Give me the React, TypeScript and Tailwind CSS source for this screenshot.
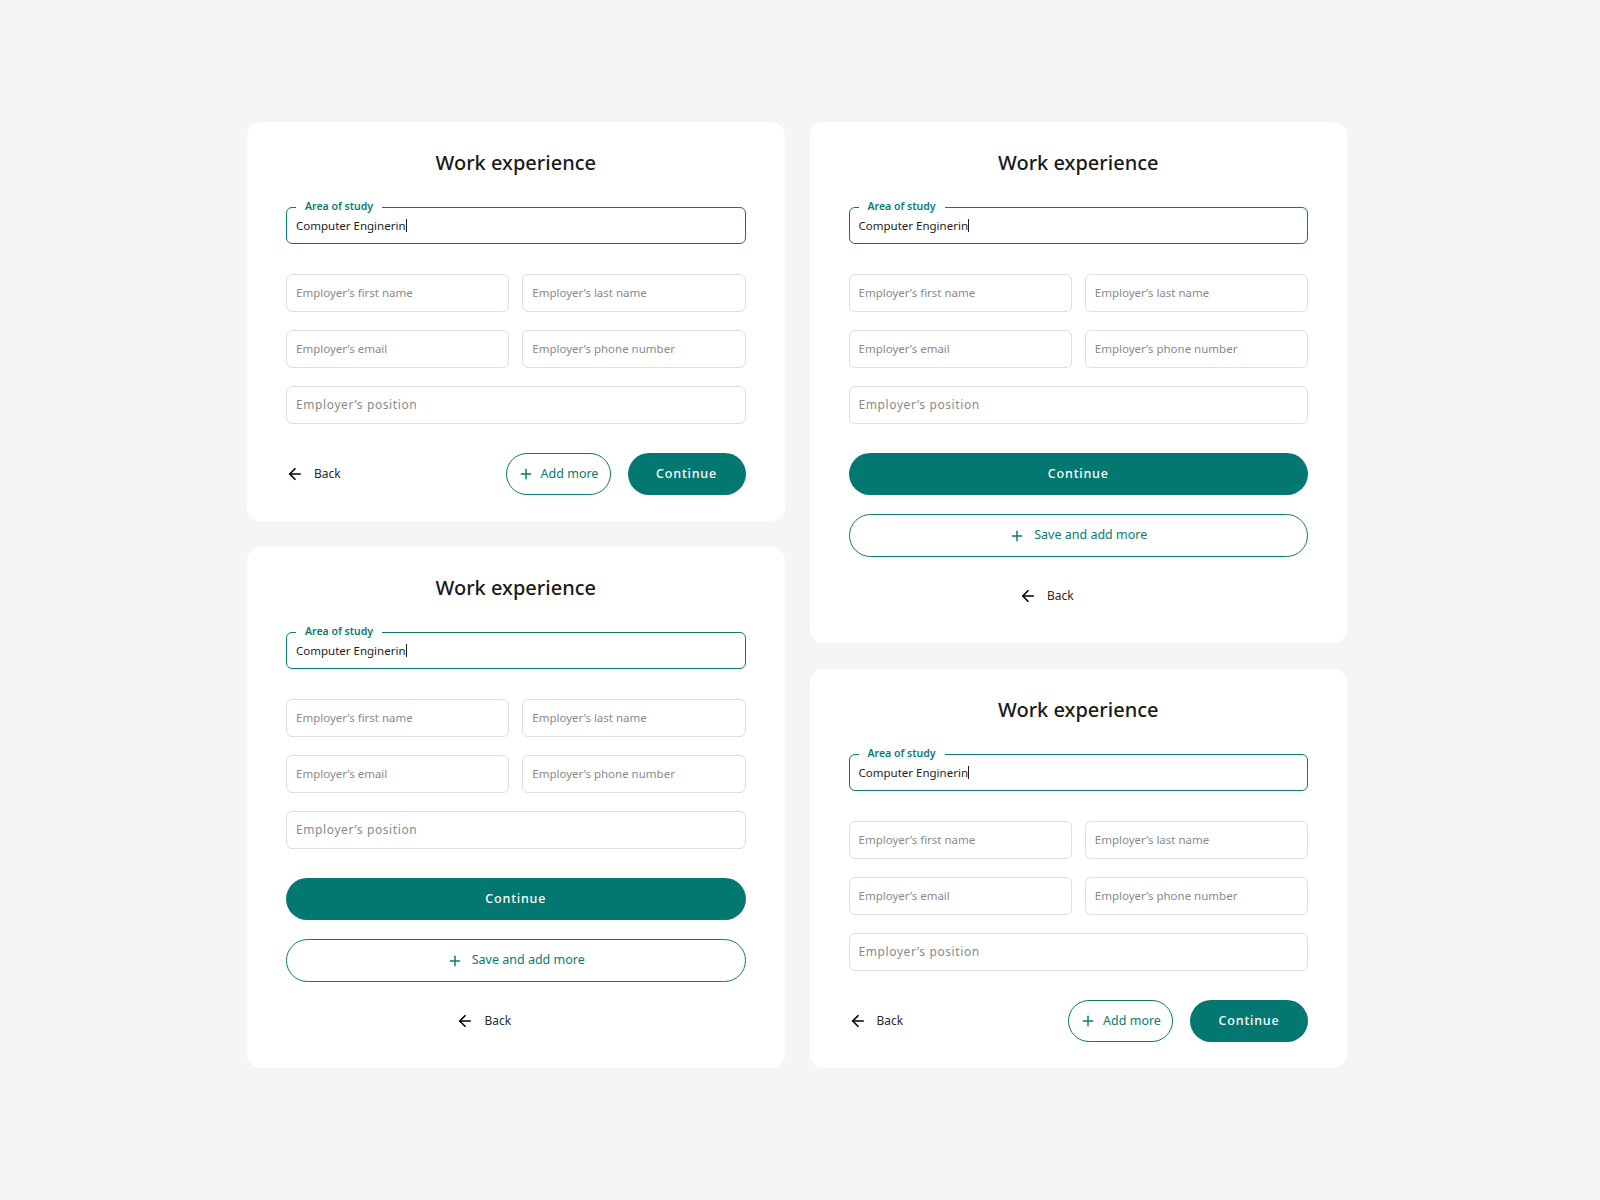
import { ArrowLeft, Plus } from "lucide-react";

const font = { fontFamily: '"Noto Sans", "Open Sans", sans-serif' };

const Field = ({ placeholder, wide }: { placeholder: string; wide?: boolean }) => (
  <div
    className={`h-[38px] border border-[#dedede] rounded-[6px] flex items-center pl-[9px] text-[#8a8a8a] ${
      wide ? "col-span-2 text-[12px] tracking-[0.6px]" : "text-[11.5px]"
    }`}
  >
    {placeholder}
  </div>
);

const Fields = () => (
  <>
    <div className="relative mt-[28px] h-[37px] border border-[#0b7a70] rounded-[6px] flex items-center pl-[9px]">
      <span className="absolute left-[9px] -top-[9px] h-[14px] leading-[14px] bg-white px-[9px] text-[10.5px] font-semibold text-[#0b7a70]">
        Area of study
      </span>
      <span className="text-[11.5px] text-[#1c1c1c]">Computer Enginerin</span>
      <span className="w-px h-[13px] bg-[#1c1c1c]" />
    </div>
    <div className="mt-[30px] grid grid-cols-2 gap-x-[13px] gap-y-[18px]">
      <Field placeholder="Employer’s first name" />
      <Field placeholder="Employer’s last name" />
      <Field placeholder="Employer’s email" />
      <Field placeholder="Employer’s phone number" />
      <Field placeholder="Employer’s position" wide />
    </div>
  </>
);

const Back = () => (
  <div className="flex items-center gap-[10px] h-[20px]">
    <ArrowLeft className="w-[18px] h-[18px] text-black" strokeWidth={2.2} />
    <span className="text-[12px] text-[#2a2a2a]">Back</span>
  </div>
);

const Title = () => (
  <h2 className="h-[32px] leading-[32px] text-center text-[20px] font-medium text-[#1a1a1a]">
    Work experience
  </h2>
);

const InlineCard = () => (
  <div className="bg-white rounded-[14px] px-[39px] pt-[25px] pb-[26px]">
    <Title />
    <Fields />
    <div className="mt-[29px] h-[42px] flex items-center justify-between">
      <Back />
      <div className="flex items-center gap-[17px]">
        <button className="w-[105px] h-[42px] rounded-full border border-[#0b7a70] flex items-center justify-center gap-[7px] text-[12.5px] text-[#0b7a70]">
          <Plus className="w-[16px] h-[16px]" strokeWidth={2.2} />
          Add more
        </button>
        <button className="w-[118px] h-[42px] rounded-full bg-[#037870] text-white text-[12.5px] font-medium tracking-[0.8px]">
          Continue
        </button>
      </div>
    </div>
  </div>
);

const StackedCard = () => (
  <div className="bg-white rounded-[14px] px-[39px] pt-[25px] pb-[37px]">
    <Title />
    <Fields />
    <button className="mt-[29px] w-full h-[42px] rounded-full bg-[#037870] text-white text-[12.5px] font-medium tracking-[0.8px]">
      Continue
    </button>
    <button className="mt-[19px] w-full h-[43px] rounded-full border border-[#0b7a70] flex items-center justify-center gap-[9px] text-[12.5px] text-[#0b7a70]">
      <Plus className="w-[16px] h-[16px]" strokeWidth={2.2} />
      Save and add more
    </button>
    <div className="mt-[29px] flex justify-center pr-[64px]">
      <Back />
    </div>
  </div>
);

export default function App() {
  return (
    <div className="min-h-screen bg-[#f5f5f5] pt-[122px]" style={font}>
      <div className="ml-[247px] w-[1100px] grid grid-cols-2 gap-x-[25px] items-start">
        <div className="flex flex-col gap-[26px]">
          <InlineCard />
          <StackedCard />
        </div>
        <div className="flex flex-col gap-[26px]">
          <StackedCard />
          <InlineCard />
        </div>
      </div>
    </div>
  );
}
